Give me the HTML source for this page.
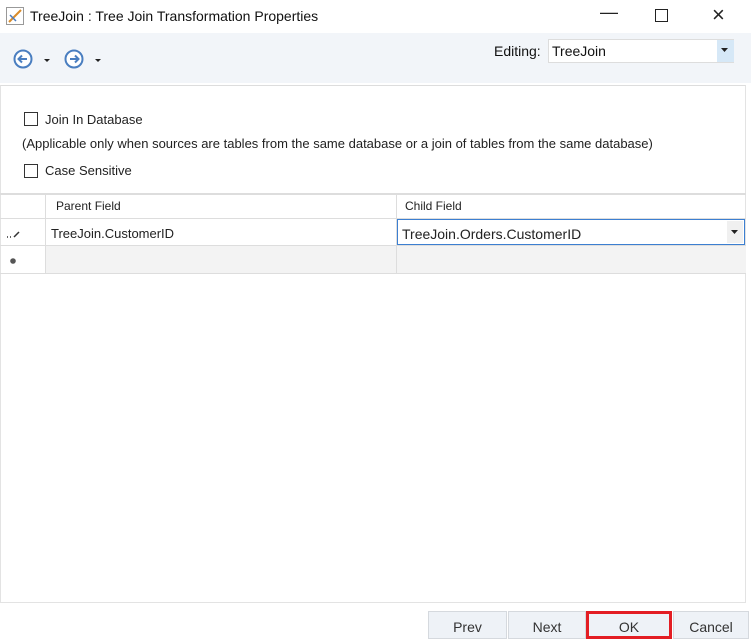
<!DOCTYPE html>
<html><head><style>
body{margin:0;width:751px;height:639px;background:#fff;font-family:"Liberation Sans",sans-serif;font-size:13px;color:#222;position:relative;overflow:hidden}
.a{position:absolute}
.cb{position:absolute;width:12px;height:12px;border:1px solid #333;background:#fff}
.btn{position:absolute;top:611px;height:28px;background:#eef2f7;border:1px solid #d5d9de;box-sizing:border-box;text-align:center;line-height:30px;font-size:14px;color:#333}
</style></head><body>
<svg class="a" style="left:6px;top:7px" width="18" height="18"><rect x="0.5" y="0.5" width="17" height="17" fill="#fff" stroke="#999"/><line x1="3" y1="15" x2="15" y2="3" stroke="#d98c2b" stroke-width="2"/><line x1="4" y1="8" x2="10" y2="14" stroke="#4a7bbf" stroke-width="1.5"/></svg>
<div class="a" style="left:30px;top:8px;font-size:14px;color:#111">TreeJoin : Tree Join Transformation Properties</div>
<div class="a" style="left:600px;top:2px;font-size:18px">&#8212;</div>
<div class="a" style="left:655px;top:9px;width:11px;height:11px;border:1px solid #222"></div>
<div class="a" style="left:712px;top:2px;font-size:22px;font-weight:300">&#215;</div>
<div class="a" style="left:0;top:33px;width:751px;height:50px;background:#f2f5f9"></div>
<svg class="a" style="left:12px;top:48px" width="100" height="22"><circle cx="11" cy="11" r="8.5" fill="#fff" stroke="#4a7ec0" stroke-width="2"/><path d="M15 11H7M10 7.5L6.5 11L10 14.5" stroke="#4a7ec0" stroke-width="2" fill="none"/><path d="M32 11h6l-3 3z" fill="#222"/><circle cx="62" cy="11" r="8.5" fill="#fff" stroke="#4a7ec0" stroke-width="2"/><path d="M58 11H66M63 7.5L66.5 11L63 14.5" stroke="#4a7ec0" stroke-width="2" fill="none"/><path d="M83 11h6l-3 3z" fill="#222"/></svg>
<div class="a" style="left:494px;top:43px;font-size:14px;color:#111">Editing:</div>
<div class="a" style="left:548px;top:39px;width:186px;height:24px;background:#fff;border:1px solid #ddd;box-sizing:border-box"></div>
<div class="a" style="left:552px;top:43px;font-size:14px;color:#111">TreeJoin</div>
<div class="a" style="left:717px;top:40px;width:17px;height:22px;background:#d6e8f7"></div>
<svg class="a" style="left:721px;top:48px" width="8" height="5"><path d="M0 0h7l-3.5 4z" fill="#222"/></svg>
<div class="a" style="left:0;top:85px;width:746px;height:518px;border:1px solid #e3e3e3;border-top:1px solid #ddd;box-sizing:border-box"></div>
<div class="cb" style="left:24px;top:112px"></div>
<div class="a" style="left:45px;top:112px">Join In Database</div>
<div class="a" style="left:22px;top:136px">(Applicable only when sources are tables from the same database or a join of tables from the same database)</div>
<div class="cb" style="left:24px;top:164px"></div>
<div class="a" style="left:45px;top:163px">Case Sensitive</div>
<div class="a" style="left:0;top:193px;width:746px;height:2px;background:#ddd"></div>
<div class="a" style="left:0;top:218px;width:746px;height:1px;background:#ddd"></div>
<div class="a" style="left:0;top:245px;width:746px;height:1px;background:#ddd"></div>
<div class="a" style="left:46px;top:246px;width:700px;height:27px;background:#f3f3f3"></div>
<div class="a" style="left:0;top:273px;width:746px;height:1px;background:#ddd"></div>
<div class="a" style="left:45px;top:195px;width:1px;height:79px;background:#ddd"></div>
<div class="a" style="left:396px;top:195px;width:1px;height:79px;background:#ddd"></div>
<div class="a" style="left:56px;top:199px;font-size:12px">Parent Field</div>
<div class="a" style="left:405px;top:199px;font-size:12px">Child Field</div>
<div class="a" style="left:51px;top:226px;font-size:13px">TreeJoin.CustomerID</div>
<div class="a" style="left:397px;top:219px;width:348px;height:26px;border:1px solid #3c7fd1;box-sizing:border-box;background:#fff"></div>
<div class="a" style="left:402px;top:226px;font-size:14px">TreeJoin.Orders.CustomerID</div>
<div class="a" style="left:727px;top:221px;width:16px;height:22px;background:#f0f0f0"></div>
<svg class="a" style="left:731px;top:230px" width="8" height="5"><path d="M0 0h7l-3.5 4z" fill="#222"/></svg>
<svg class="a" style="left:6px;top:229px" width="14" height="10"><path d="M1 8h1M4 8h1M8 8L13 3" stroke="#333" stroke-width="1.5"/></svg>
<svg class="a" style="left:9px;top:257px" width="8" height="8"><circle cx="4" cy="4" r="2.8" fill="#555"/></svg>
<div class="btn" style="left:428px;width:79px">Prev</div>
<div class="btn" style="left:508px;width:78px">Next</div>
<div class="btn" style="left:586px;width:86px;border:3px solid #e31e24;line-height:26px">OK</div>
<div class="btn" style="left:673px;width:76px">Cancel</div>
</body></html>
